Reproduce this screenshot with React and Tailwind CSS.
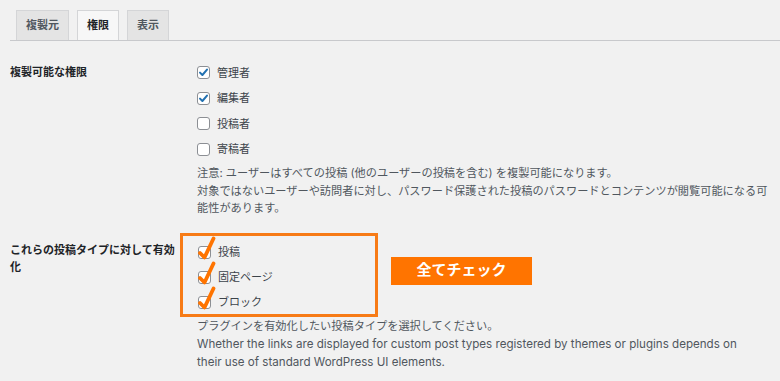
import React from "react";

const font = "font-['Inter','Noto_Sans_CJK_JP',sans-serif]";

function BlueBox({ checked }) {
  return (
    <span className="relative inline-block w-[13px] h-[13px] shrink-0 rounded-[3px] border border-[#8c8f94] bg-white">
      {checked && (
        <svg className="absolute left-[-1px] top-[-1px]" width="13" height="13" viewBox="0 0 13 13">
          <path d="M3 6.6 L5.4 9 L10 3.6" fill="none" stroke="#2271b1" strokeWidth="2" strokeLinecap="round" strokeLinejoin="round" />
        </svg>
      )}
    </span>
  );
}

function OrangeBox() {
  return (
    <span className="relative inline-block w-[13px] h-[13px] shrink-0 rounded-[3px] border border-[#8c8f94] bg-white">
      <svg className="absolute left-[-2px] top-[-11px]" width="19" height="24" viewBox="0 0 19 24">
        <path d="M3 17 L7.5 21.5 L16.5 2.5" fill="none" stroke="#ff7400" strokeWidth="3.8" strokeLinecap="round" strokeLinejoin="round" />
      </svg>
    </span>
  );
}

export default function App() {
  const roles = [
    ["管理者", true],
    ["編集者", true],
    ["投稿者", false],
    ["寄稿者", false],
  ];
  return (
    <div className={`w-[780px] h-[381px] overflow-hidden bg-[#f1f1f1] ${font}`}>
      {/* tabs */}
      <div className="pt-[10px] pl-[10px]">
        <div className="flex gap-[8px] pl-[6px] border-b border-[#c8c9cc]">
          <div className="h-[30px] px-[9px] flex items-center border border-b-0 border-[#d4d5d7] bg-[#e4e4e4] text-[11px] font-semibold text-[#50575e]">複製元</div>
          <div className="h-[30px] px-[9px] flex items-center border border-b-0 border-[#d4d5d7] bg-[#f7f7f7] text-[11px] font-semibold text-[#1d2327]">権限</div>
          <div className="h-[30px] px-[9px] flex items-center border border-b-0 border-[#d4d5d7] bg-[#e4e4e4] text-[11px] font-semibold text-[#50575e]">表示</div>
        </div>
      </div>

      {/* row 1 */}
      <div className="flex mt-[19px]">
        <div className="w-[197px] shrink-0 pl-[10px] pt-[4px] text-[11px] leading-[17px] font-bold text-[#1d2327]">複製可能な権限</div>
        <div className="w-[576px]">
          {roles.map(([name, c]) => (
            <div key={name} className="h-[25.5px] flex items-center gap-[7px]">
              <BlueBox checked={c} />
              <span className="text-[11px] text-[#3c434a]">{name}</span>
            </div>
          ))}
          <div className="mt-[3px] text-[11.2px] leading-[17.5px] text-[#50575e]">
            <div>注意: ユーザーはすべての投稿 (他のユーザーの投稿を含む) を複製可能になります。</div>
            <div>対象ではないユーザーや訪問者に対し、パスワード保護された投稿のパスワードとコンテンツが閲覧可能になる可能性があります。</div>
          </div>
        </div>
      </div>

      {/* row 2 */}
      <div className="flex mt-[15px]">
        <div className="w-[180px] shrink-0 pl-[10px] pt-[9.5px] text-[11px] leading-[17px] font-bold text-[#1d2327]">これらの投稿タイプに対して有効化</div>
        <div>
          <div className="flex items-start">
            <div className="w-[198px] h-[84px] border-[3px] border-[#f77b16] pt-[4px] pl-[15px]">
              {["投稿", "固定ページ", "ブロック"].map((n) => (
                <div key={n} className="h-[25px] flex items-center gap-[7px]">
                  <OrangeBox />
                  <span className="text-[11px] text-[#3c434a]">{n}</span>
                </div>
              ))}
            </div>
            <div className="ml-[13px] mt-[24px] w-[141px] h-[28px] bg-[#ff7400] flex items-center justify-center text-white text-[15px] font-bold">全てチェック</div>
          </div>
          <div className="pl-[17px] w-[577px] leading-[18px] text-[#50575e]">
            <div className="text-[11.2px]">プラグインを有効化したい投稿タイプを選択してください。</div>
            <div className="text-[11.6px]">Whether the links are displayed for custom post types registered by themes or plugins depends on their use of standard WordPress UI elements.</div>
          </div>
        </div>
      </div>
    </div>
  );
}
